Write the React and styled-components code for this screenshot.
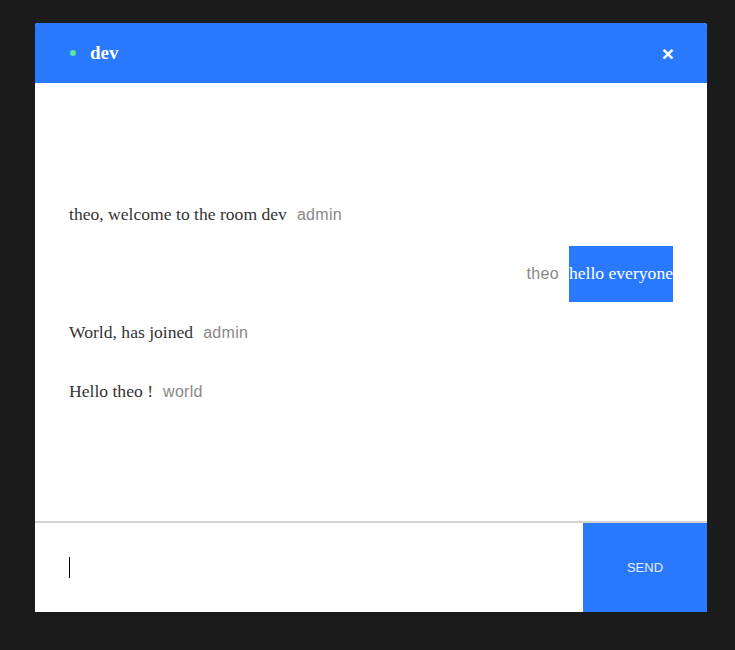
import React from "react";
import styled, { createGlobalStyle } from "styled-components";

const Global = createGlobalStyle`
  html, body { margin: 0; padding: 0; background: #1b1b1c; }
  body { font-family: "Liberation Serif", "Times New Roman", serif; }
`;

const Page = styled.div`
  width: 735px;
  height: 650px;
  padding: 23px 28px 38px 35px;
  box-sizing: border-box;
`;

const Card = styled.div`
  width: 672px;
  height: 589px;
  display: flex;
  flex-direction: column;
  background: #fff;
  border-radius: 3px 3px 0 0;
  overflow: hidden;
`;

const Header = styled.header`
  height: 60px;
  flex: none;
  background: #2979ff;
  display: flex;
  align-items: center;
  padding: 0 33px 0 34px;
  color: #fff;
`;

const Dot = styled.span`
  width: 6px;
  height: 6px;
  border-radius: 50%;
  background: #5ee3a1;
  margin-right: 14px;
  margin-left: 1px;
`;

const Room = styled.h1`
  margin: 0;
  font-size: 19px;
  font-weight: bold;
  flex: 1;
`;

const Close = styled.span`
  font-family: "Liberation Sans", Arial, sans-serif;
  font-weight: bold;
  font-size: 21px;
  line-height: 1;
`;

const Body = styled.div`
  flex: 1;
  display: flex;
  flex-direction: column;
  justify-content: center;
  gap: 3px;
  padding: 2px 34px 0;
  border-bottom: 2px solid #d4d4d4;
`;

const Row = styled.div`
  height: 56px;
  display: flex;
  align-items: center;
  justify-content: ${(p) => (p.$mine ? "flex-end" : "flex-start")};
  gap: 10px;
`;

const Text = styled.span`
  font-size: 17.6px;
  color: #333;
  ${(p) =>
    p.$mine &&
    `
    background: #2979ff;
    color: #fff;
    height: 56px;
    display: flex;
    align-items: center;
  `}
`;

const Sender = styled.span`
  font-family: "Liberation Sans", Arial, sans-serif;
  font-size: 16px;
  color: #888;
  letter-spacing: 0.3px;
`;

const Footer = styled.form`
  height: 89px;
  flex: none;
  display: flex;
  margin: 0;
`;

const Field = styled.div`
  flex: 1;
  position: relative;
  display: flex;
`;

const Input = styled.input`
  flex: 1;
  border: none;
  outline: none;
  padding: 0 34px;
  font-size: 18px;
  font-family: "Liberation Serif", serif;
`;

const Caret = styled.span`
  position: absolute;
  left: 34px;
  top: 34px;
  width: 1px;
  height: 21px;
  background: #000;
  pointer-events: none;
`;

const Send = styled.button`
  width: 124px;
  border: none;
  background: #2979ff;
  color: #e8eeff;
  font-family: "Liberation Sans", Arial, sans-serif;
  font-size: 13px;
  text-transform: uppercase;
`;

const messages = [
  { text: "theo, welcome to the room dev", user: "admin" },
  { text: "hello everyone", user: "theo", mine: true },
  { text: "World, has joined", user: "admin" },
  { text: "Hello theo !", user: "world" },
];

export default function App() {
  return (
    <>
      <Global />
      <Page>
        <Card>
          <Header>
            <Dot />
            <Room>dev</Room>
            <Close>×</Close>
          </Header>
          <Body>
            {messages.map((m, i) => (
              <Row key={i} $mine={m.mine}>
                {m.mine ? (
                  <>
                    <Sender>{m.user}</Sender>
                    <Text $mine>{m.text}</Text>
                  </>
                ) : (
                  <>
                    <Text>{m.text}</Text>
                    <Sender>{m.user}</Sender>
                  </>
                )}
              </Row>
            ))}
          </Body>
          <Footer onSubmit={(e) => e.preventDefault()}>
            <Field>
              <Input />
              <Caret />
            </Field>
            <Send type="submit">Send</Send>
          </Footer>
        </Card>
      </Page>
    </>
  );
}
